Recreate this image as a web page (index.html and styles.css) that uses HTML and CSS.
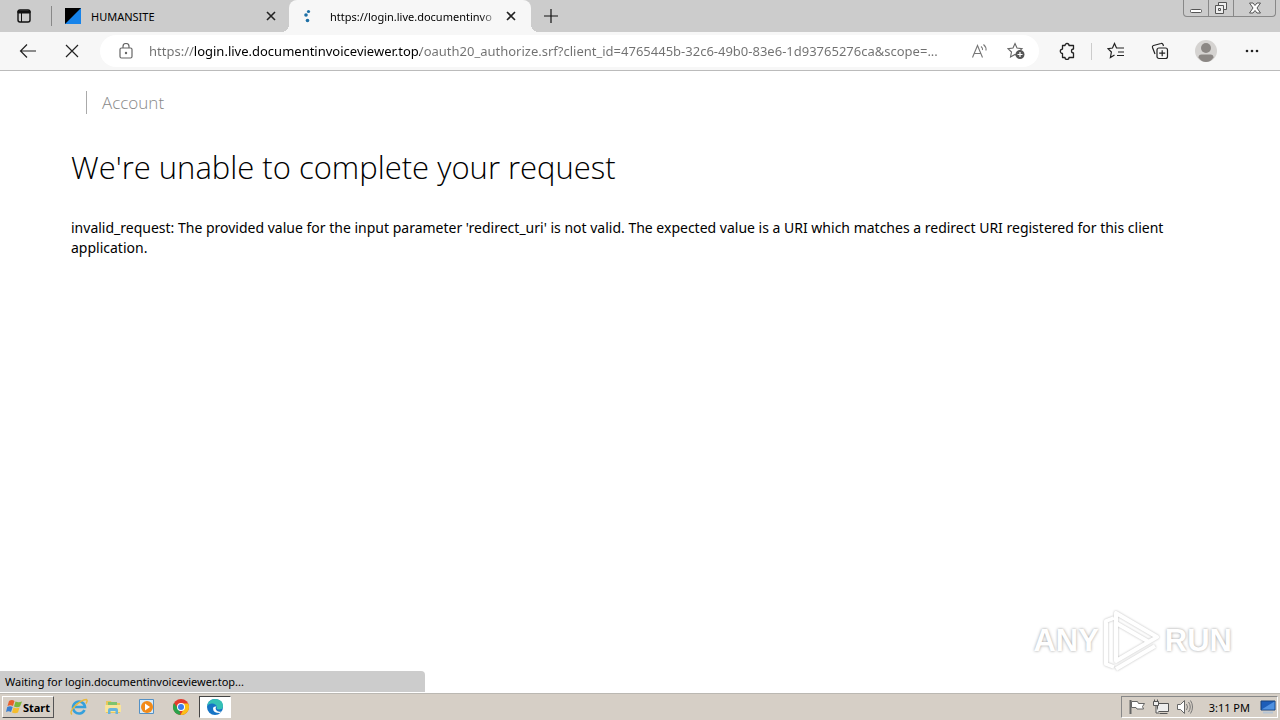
FILE: index.html
```html
<!DOCTYPE html>
<html lang="en">
  <head>
    <meta charset="utf-8">
    <meta name="viewport" content="width=device-width,initial-scale=1.0">
    <title>Account</title>
    <link rel="stylesheet" href="styles.css">
  </head>
  <body>
    <header class="tabs">
      <button class="tab-actions" aria-label="Tab actions">
        <svg width="16" height="16" viewBox="0 0 16 16"><rect x="2" y="2" width="12" height="12" rx="2" fill="none" stroke="#111" stroke-width="1.4"/><path d="M2 3h12v2H2z" fill="#111" stroke="#111"/><path d="M5.500 5v9" stroke="#111"/></svg>
      </button>
      <div class="tab">
        <svg width="16" height="16" viewBox="0 0 16 16"><path d="M0 0h16v16H0z" fill="#1683ea"/><path d="M0 0h16L0 16z" fill="#000"/></svg>
        <span class="tab-title">HUMANSITE</span>
        <button aria-label="Close tab"><svg width="10" height="10" viewBox="0 0 10 10"><path d="M1 1l8 8M9 1l-8 8" stroke="#222" stroke-width="1.6"/></svg></button>
      </div>
      <div class="tab active">
        <svg width="16" height="16" viewBox="0 0 16 16"><g fill="#1d6fa5"><circle cx="5.500" cy="3.500" r="1.600"/><circle cx="3" cy="7" r="1.800"/><circle cx="4.500" cy="12.500" r="1.800"/></g></svg>
        <span class="tab-title">https://login.live.documentinvo</span>
        <button aria-label="Close tab"><svg width="10" height="10" viewBox="0 0 10 10"><path d="M1 1l8 8M9 1l-8 8" stroke="#222" stroke-width="1.6"/></svg></button>
      </div>
      <button class="new-tab" aria-label="New tab"><svg width="14" height="14" viewBox="0 0 14 14"><path d="M7 0v14M0 7h14" stroke="#111" stroke-width="1.200"/></svg></button>
      <div class="window-buttons">
        <button aria-label="Minimize"><svg width="12" height="12" viewBox="0 0 12 12"><rect x=".5" y="7.500" width="11" height="3" rx="1" fill="#fff" stroke="#555"/></svg></button>
        <button aria-label="Restore"><svg width="14" height="14" viewBox="0 0 14 14"><g fill="#eee" stroke="#555"><path d="M4.500 1.500h8v7h-8z"/><path d="M1.500 4.500h8v8h-8z"/><path d="M4.500 7.500h2v2h-2z"/></g></svg></button>
        <button class="close" aria-label="Close"><svg width="12" height="12" viewBox="0 0 12 12"><path d="M.5 1h3.500l2 2.500L8 1h3.500L8 6l3.500 5H8L6 8.500 4 11H.5L4 6z" fill="#fff" stroke="#555"/></svg></button>
      </div>
    </header>

    <nav class="toolbar">
      <button aria-label="Back"><svg width="18" height="16" viewBox="0 0 18 16"><path d="M17 8H1.500M8 1.500L1.500 8 8 14.500" fill="none" stroke="#222" stroke-width="1.200"/></svg></button>
      <button class="stop" aria-label="Stop"><svg width="14" height="14" viewBox="0 0 14 14"><path d="M1 1l12 12M13 1L1 13" stroke="#222" stroke-width="1.200"/></svg></button>
      <div class="address">
        <button aria-label="Site information"><svg width="14" height="16" viewBox="0 0 14 16"><g fill="none" stroke="#666" stroke-width="1.200"><rect x="1" y="5" width="12" height="10" rx="1.500"/><path d="M4 5V3.500a3 3 0 0 1 6 0V5"/></g><circle cx="7" cy="10" r="1.200" fill="#666"/></svg></button>
        <input class="url" type="text" aria-label="Address" value="https://login.live.documentinvoiceviewer.top/oauth20_authorize.srf?client_id=4765445b-32c6-49b0-83e6-1d93765276ca&amp;scope=...">
        <button aria-label="Read aloud"><svg width="18" height="16" viewBox="0 0 18 16"><g fill="none" stroke="#777" stroke-width="1.100"><path d="M1.500 14.500L6.500 2.500l5 12M3.300 10.500h6.400"/><path d="M10 3.500q2 1.500 1.500 3.500M12.500 1.500q3 2.500 2.500 6"/></g></svg></button>
        <button class="favorite" aria-label="Add to favorites"><svg width="18" height="18" viewBox="0 0 18 18"><path d="M8 1.500l2 4.500 5 .6-3.600 3.400 1 5L8 12.500 3.500 15l1-5L1 6.600 6 6z" fill="none" stroke="#666" stroke-width="1.100"/><circle cx="13" cy="12.500" r="4.500" fill="#555"/><path d="M13 10v5M10.500 12.500h5" stroke="#fff" stroke-width="1.200"/></svg></button>
      </div>
      <div class="tools">
        <button aria-label="Extensions"><svg width="18" height="18" viewBox="0 0 18 18"><path d="M4.500 3.500H7a2 2 0 0 1 4 0h4.500V7a2 2 0 0 0 0 4v4.500H11a2 2 0 0 1-4 0H4.500V11.500a2.200 2.200 0 0 1 0-4.400z" fill="none" stroke="#222" stroke-width="1.300" stroke-linejoin="round"/></svg></button>
        <span class="divider"></span>
        <button aria-label="Favorites"><svg width="18" height="18" viewBox="0 0 18 18"><path d="M7.500 13L3.400 15.500l1-5.500L1 6.600 5.500 6l2-4.500 2 4.500H17M11 10h6M10 13.500h7" fill="none" stroke="#222" stroke-width="1.200"/></svg></button>
        <button aria-label="Collections"><svg width="18" height="18" viewBox="0 0 18 18"><g fill="none" stroke="#222" stroke-width="1.200"><path d="M4 12L1.500 5.500q-.5-1.500 1-2L10 1.500q1.500-.5 2 1l.5 1.500"/><rect x="6" y="6" width="10.500" height="10.500" rx="2"/><path d="M11.200 8.200v6M8.200 11.200h6"/></g></svg></button>
        <button aria-label="Profile"><svg width="22" height="22" viewBox="0 0 22 22"><circle cx="11" cy="11" r="11" fill="#d5d3d1"/><circle cx="11" cy="8" r="5" fill="#8b8784"/><path d="M3.500 17.500q0-3 3-3h9q3 0 3 3Q15.500 22 11 22t-7.500-4.500z" fill="#8b8784"/></svg></button>
        <button aria-label="Settings and more"><svg width="14" height="4" viewBox="0 0 14 4"><g fill="#222"><circle cx="2" cy="2" r="1.300"/><circle cx="7" cy="2" r="1.300"/><circle cx="12" cy="2" r="1.300"/></g></svg></button>
      </div>
    </nav>

    <main class="page">
      <div class="brand"><span>Account</span></div>
      <h1>We're unable to complete your request</h1>
      <p>invalid_request: The provided value for the input parameter 'redirect_uri' is not valid. The expected value is a URI which matches a redirect URI registered for this client application.</p>
      <div class="status">Waiting for login.documentinvoiceviewer.top...</div>
      <div class="watermark">
        <span>ANY</span>
        <svg width="58" height="64" viewBox="0 0 58 64"><g fill="none" stroke="#fff" stroke-width="4" stroke-linejoin="round"><path d="M11 9L3 12v43l8 3M52 37L13 60"/><path d="M13 4v48l41-24z"/><path d="M13 14l33 19"/></g></svg>
        <span>RUN</span>
      </div>
    </main>

    <footer class="taskbar">
      <button class="start">
        <svg width="17" height="16" viewBox="0 0 17 16"><path d="M3 2q3-2 5.500 0L7 7Q4.500 5.500 1.500 7z" fill="#e8602c"/><path d="M9.500 2.500q3 1.500 6.500 0L14 7.500q-3 1.500-6 0z" fill="#7ab83c"/><path d="M1.200 8q3-1.500 5.500 0L5 13q-2.500-1.500-5 0z" fill="#3a7fd0"/><path d="M7.500 8.500q3 1.500 6 0L12 13.500q-3 1.500-6 0z" fill="#f5bd2d"/></svg>
        Start
      </button>
      <button aria-label="Internet Explorer"><svg width="18" height="18" viewBox="0 0 18 18"><path d="M14.500 12A6 6 0 1 1 15 9H5" fill="none" stroke="#35a0dc" stroke-width="2.600"/><path d="M2 16.500Q-1 14 5 8t11.500-6.500q1.500 1-.5 4" fill="none" stroke="#e9b83a" stroke-width="1.400"/></svg></button>
      <button aria-label="File Explorer"><svg width="18" height="18" viewBox="0 0 18 18"><path d="M2 3h5l1 2h8v10H2z" fill="#e9c75c"/><path d="M4 4h9v4H4z" fill="#7dc36e"/><path d="M1 7h16v7H1z" fill="#f8e49b"/><path d="M4 16v-4q0-2 2-2h6q2 0 2 2v4h-2.500v-3h-5v3z" fill="#67b4dc"/></svg></button>
      <button aria-label="Media Player"><svg width="18" height="18" viewBox="0 0 18 18"><path d="M1.500 1.500h14v14h-14z" fill="#d9ebf8" stroke="#5491c5"/><circle cx="9" cy="9" r="6" fill="#f28a18"/><path d="M7 5.500v7l5-3.500z" fill="#fff"/></svg></button>
      <button aria-label="Chrome"><svg width="18" height="18" viewBox="0 0 18 18"><circle cx="9" cy="9" r="8" fill="#e33b2e"/><path d="M2 5l5.500 7.500L8.500 17A8 8 0 0 1 2 5z" fill="#29a34b"/><path d="M9 5.500h7.200A8 8 0 0 1 8.500 17L12 10.500z" fill="#fbc116"/><circle cx="9" cy="9" r="4" fill="#fff"/><circle cx="9" cy="9" r="3" fill="#3b7ded"/></svg></button>
      <button class="running" aria-label="Edge"><svg width="18" height="18" viewBox="0 0 18 18"><circle cx="9" cy="9" r="8" fill="#1674c5"/><path d="M1 8.500Q2 1 9.500 1 17 1.500 17 8q0 3.500-4 3.500-3 0-2-2.500Q10 5.500 6 5.500 2.500 5.500 1 8.500z" fill="#35c1b5"/><path d="M10.500 8.500q-2 2 .5 4.500 2.500 1.500 5 .2L14 15Q7 15 7 10.500q0-2.500 3.500-2z" fill="#fff"/></svg></button>
      <div class="tray">
        <svg width="18" height="16" viewBox="0 0 18 16"><g fill="#fff" stroke="#666"><path d="M2.500 1v14" stroke-width="2"/><path d="M3.500 2.500h6l1 2h6l-2 3 1 2.500H9l-1-1.500H3.500z"/></g></svg>
        <svg width="18" height="16" viewBox="0 0 18 16"><g fill="#eee" stroke="#555"><path d="M5.500 4.500h11v8h-11zM7.500 14.500h8"/><path d="M1.500 2.500h5v4h-5zM2.500.5v2M5.500.5v2M4 6.500V14h3"/></g></svg>
        <svg width="18" height="16" viewBox="0 0 18 16"><path d="M1.500 5.500h3l4-4v13l-4-4h-3z" fill="#fff" stroke="#666"/><path d="M10.500 5q2 3 0 6M12.500 3q3.500 5 0 10M14.500 1.500q4 6.500 0 13" fill="none" stroke="#777"/></svg>
        <time>3:11 PM</time>
        <svg width="16" height="14" viewBox="0 0 16 14"><path d="M1 1h14v9H1z" fill="#1c5db8" stroke="#174079"/><path d="M1.500 9.500L14.500 1.500v8z" fill="#4f91e0"/><path d="M3 12.500h10" stroke="#b6c5d5" stroke-width="2"/></svg>
      </div>
    </footer>
  </body>
</html>
```

FILE: styles.css
```css
* { box-sizing: border-box; }
body {
  margin: 0;
  min-height: 100vh;
  display: flex;
  flex-direction: column;
  background: #fff;
  color: #000;
  font-family: "Noto Sans", "Open Sans", sans-serif;
  font-size: 12px;
}
button { border: none; background: none; padding: 0; font: inherit; color: inherit; display: flex; align-items: center; justify-content: center; flex-shrink: 0; }
svg { display: block; flex-shrink: 0; }

.tabs { display: flex; height: 32px; background: #ccc; }
.tab-actions { width: 48px; }
.tab { display: flex; align-items: center; width: 238px; margin-left: 3px; padding: 0 10px 0 14px; background: linear-gradient(#888, #888) left center / 1px 20px no-repeat; }
.tab .tab-title { flex: 1; margin: 0 8px 0 10px; font-size: 11px; white-space: nowrap; }
.tab button { width: 16px; height: 16px; }
.tab.active { position: relative; width: 242px; margin-left: 0; padding-right: 12px; border-radius: 8px 8px 0 0; background: #f7f7f7; }
/* flared feet of the open tab */
.active::before, .active::after { content: ""; position: absolute; bottom: 0; width: 8px; height: 8px; }
.active::before { right: 100%; background: radial-gradient(circle at 0 0, transparent 8px, #f7f7f7 8px); }
.active::after { left: 100%; background: radial-gradient(circle at 100% 0, transparent 8px, #f7f7f7 8px); }
.active .tab-title { margin-left: 11px; margin-right: 0; -webkit-mask-image: linear-gradient(to right, #000 150px, transparent 170px); mask-image: linear-gradient(to right, #000 150px, transparent 170px); }
.new-tab { width: 40px; }
.window-buttons { display: flex; height: 17px; margin: 0 4px 0 auto; border: 1px solid #888; border-top: none; border-radius: 0 0 4px 4px; }
.window-buttons button { width: 25px; border-right: 1px solid #888; }
.window-buttons .close { width: 41px; border: none; }

.toolbar { display: flex; align-items: center; height: 39px; padding: 0 14px 0 18px; background: #f7f7f7; border-bottom: 1px solid #bbb; }
.toolbar > button { width: 20px; }
.toolbar .stop { margin-left: 24px; }
.address { flex: 1; display: flex; align-items: center; height: 32px; margin-left: 18px; padding: 0 14px 0 19px; border-radius: 16px; background: #fff; }
.url {
  flex: 1;
  min-width: 0;
  margin: 0 12px 0 16px;
  padding: 0;
  border: none;
  outline: none;
  font: 13px "Noto Sans", "Open Sans", sans-serif;
  color: transparent;
  /* host name is darker than the rest of the address */
  background: linear-gradient(to right, #707070 45px, #000 45px, #000 271px, #707070 271px);
  -webkit-background-clip: text;
  background-clip: text;
}
.favorite { margin-left: 18px; }
.tools { display: flex; align-items: center; margin-left: 18px; }
.tools button { width: 28px; margin-right: 18px; }
.tools button:nth-of-type(1) { width: 20px; margin-right: 14px; }
.tools button:nth-of-type(2) { margin-right: 16px; }
.tools button:last-child { margin-right: 0; }
.divider { width: 1px; height: 17px; margin-right: 10px; background: #ccc; }

.page { position: relative; flex: 1; padding: 20px 71px 0; }
.brand { padding-left: 15px; font: 300 17px/23px "Open Sans", sans-serif; color: #888; }
.brand span { display: inline-block; padding-left: 15px; border-left: 1px solid #aaa; }
h1 { margin: 29px 0 0; font: 300 31px/48px "Open Sans", sans-serif; }
.page p { margin: 27px 0 0; font-size: 14px; line-height: 20px; }
.status { position: absolute; left: 0; bottom: 1px; width: 425px; padding-left: 5px; font-size: 11px; line-height: 21px; background: #ccc; border-radius: 0 4px 0 0; }
.watermark { position: absolute; right: 48px; bottom: 20px; display: flex; align-items: center; gap: 4px; color: #fff; font: 700 31px/64px "Liberation Sans", sans-serif; text-shadow: 0 0 3px #999; }
.watermark svg { filter: drop-shadow(0 0 1px #bbb); }

.taskbar { display: flex; align-items: center; height: 27px; padding: 0 2px; background: #d6cfc6; border-top: 1px solid #bbb8b2; }
.taskbar button { width: 34px; height: 22px; }
.taskbar .start { width: 52px; margin-right: 8px; border: 1px solid; border-color: #fff #555 #555 #fff; font-weight: 700; font-size: 11px; }
.taskbar .running { width: 32px; margin-left: 1px; border: 1px solid; border-color: #444 #fff #fff #444; background: #fff; }
.tray { display: flex; align-items: center; gap: 6px; height: 22px; margin-left: auto; padding: 0 1px 0 6px; border: 1px solid; border-color: #888 #fff #fff #888; }
.tray time { margin: 0 4px 0 9px; font-size: 11px; }
```
